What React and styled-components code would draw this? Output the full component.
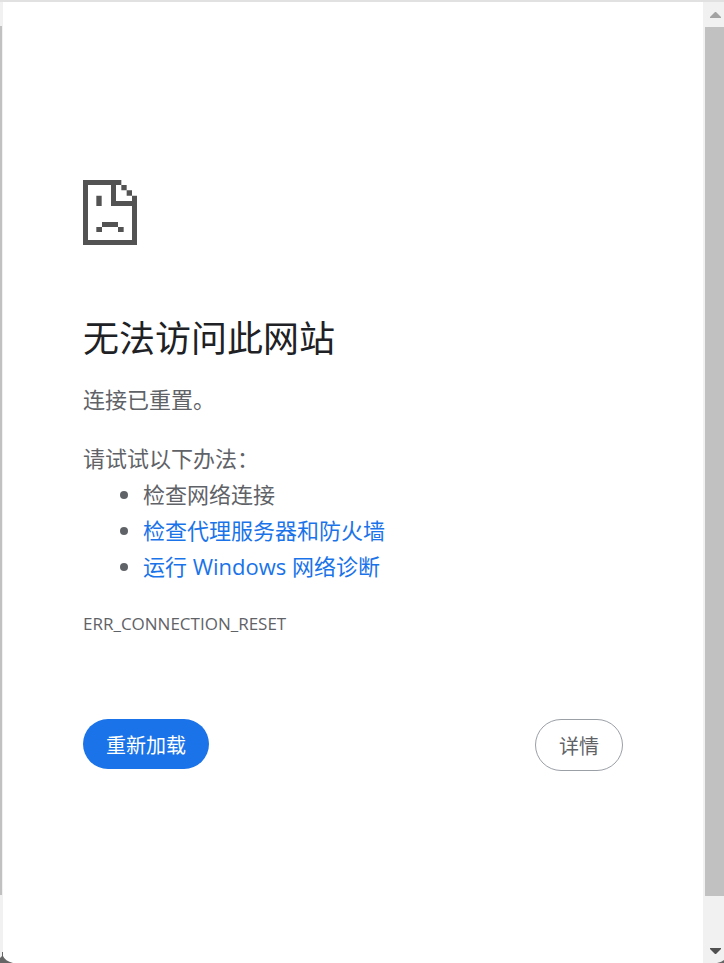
import React, { useState } from 'react';
import styled, { createGlobalStyle } from 'styled-components';

const suggestions = [
  { text: '检查网络连接' },
  { text: '检查代理服务器和防火墙', href: '#proxy' },
  { text: '运行 Windows 网络诊断', href: '#diagnose' },
];

const App = () => {
  const [loading, setLoading] = useState(false);

  const handleReload = () => {
    setLoading(true);
    window.location.reload();
  };

  return (
    <>
      <GlobalStyle />
      <Frame>
        <LeftTrack>
          <LeftThumb />
        </LeftTrack>

        <Content>
          <SadPage viewBox="0 0 162 195" role="img" aria-label="错误">
            <path d="M0 0H115V15H99V63H147V47H162V195H0ZM15 15V180H147V78H84V15Z" fillRule="evenodd" />
            <path d="M115 15h16v16h-16zM131 31h16v16h-16z" />
            <path d="M40 47h16v31h-16zM57 126h48v15h17v15h-17v-15h-48v15h-17v-15h17z" />
          </SadPage>
          <Title>无法访问此网站</Title>
          <Summary>连接已重置。</Summary>
          <Hint>请试试以下办法：</Hint>
          <List>
            {suggestions.map((item) => (
              <li key={item.text}>
                {item.href ? <Link href={item.href}>{item.text}</Link> : item.text}
              </li>
            ))}
          </List>
          <ErrorCode>ERR_CONNECTION_RESET</ErrorCode>
          <Actions>
            <ReloadButton type="button" onClick={handleReload} disabled={loading}>
              重新加载
            </ReloadButton>
            <DetailsButton type="button">详情</DetailsButton>
          </Actions>
        </Content>

        <Scrollbar>
          <Arrow viewBox="0 0 11 6" $color="#a3a3a3" aria-hidden="true">
            <path d="M5 0h1L11 5v1H0V5z" />
          </Arrow>
          <Thumb />
          <Arrow viewBox="0 0 11 6" $color="#505050" aria-hidden="true">
            <path d="M0 0h11v1L6 6H5L0 1z" />
          </Arrow>
        </Scrollbar>

        <LeftCorner viewBox="0 0 13 11" aria-hidden="true">
          <path d="M0 11V6L2 4V0H3V4Q5 9 13 11Z" />
        </LeftCorner>
        <RightCorner viewBox="0 0 7 3" aria-hidden="true">
          <path d="M0 3Q5 2 7 0V3Z" />
        </RightCorner>
      </Frame>
    </>
  );
};

export default App;

// Styles:
const GlobalStyle = createGlobalStyle`
  * {
    box-sizing: border-box;
  }

  body {
    margin: 0;
    background: #fff;
    color: #5f6368;
    font-family: 'Open Sans', 'Noto Sans CJK SC', sans-serif;
    font-size: 22px;
    line-height: 36px;
  }
`;

const Frame = styled.div`
  position: relative;
  display: grid;
  grid-template-columns: 3px 1fr 21px;
  min-height: 100vh;
  border-top: 2px solid #e1e1e1;
`;

const LeftTrack = styled.div`
  display: flex;
  padding: 24px 1px 68px 0;
  background: #f1f1f1;
`;

const LeftThumb = styled.div`
  flex: 1;
  background: #c1c1c1;
`;

const Content = styled.main`
  padding: 178px 80px 80px;
`;

const SadPage = styled.svg`
  display: block;
  width: 54px;
  height: 65px;
  fill: #535353;
`;

const Title = styled.h1`
  margin: 68px 0 0;
  color: #202124;
  font-size: 36px;
  font-weight: 400;
  line-height: 52px;
`;

const Summary = styled.p`
  margin: 16px 0 0;
`;

const Hint = styled.p`
  margin: 23px 0 0;
`;

const List = styled.ul`
  margin: 0;
  padding-left: 60px;
`;

const Link = styled.a`
  color: #1a73e8;
  text-decoration: none;

  &:hover {
    text-decoration: underline;
  }
`;

const ErrorCode = styled.div`
  margin-top: 28px;
  font-size: 17px;
  line-height: 24px;
`;

const Actions = styled.div`
  display: flex;
  justify-content: space-between;
  align-items: flex-start;
  margin-top: 83px;
`;

const Button = styled.button`
  padding: 12px 23px 8px;
  border: 0;
  border-radius: 26px;
  font-family: inherit;
  font-size: 20px;
  line-height: 30px;
  cursor: pointer;
`;

const ReloadButton = styled(Button)`
  background: #1a73e8;
  color: #fff;
`;

const DetailsButton = styled(Button)`
  border: 1px solid #9aa0a6;
  background: #fff;
  color: #5f6368;
`;

const Scrollbar = styled.div`
  display: flex;
  flex-direction: column;
  padding: 10px 0 9px 2px;
  background: #f1f1f1;
`;

const Arrow = styled.svg`
  width: 11px;
  height: 6px;
  margin-left: 5px;
  fill: ${({ $color }) => $color};
`;

const Thumb = styled.div`
  flex: 1;
  margin: 9px 0 52px;
  background: #c1c1c1;
`;

// window corners, drawn over the page
const LeftCorner = styled.svg`
  position: absolute;
  left: 0;
  bottom: 0;
  width: 13px;
  height: 11px;
  fill: #666;
`;

const RightCorner = styled.svg`
  position: absolute;
  right: 0;
  bottom: 0;
  width: 7px;
  height: 3px;
  fill: #666;
`;
